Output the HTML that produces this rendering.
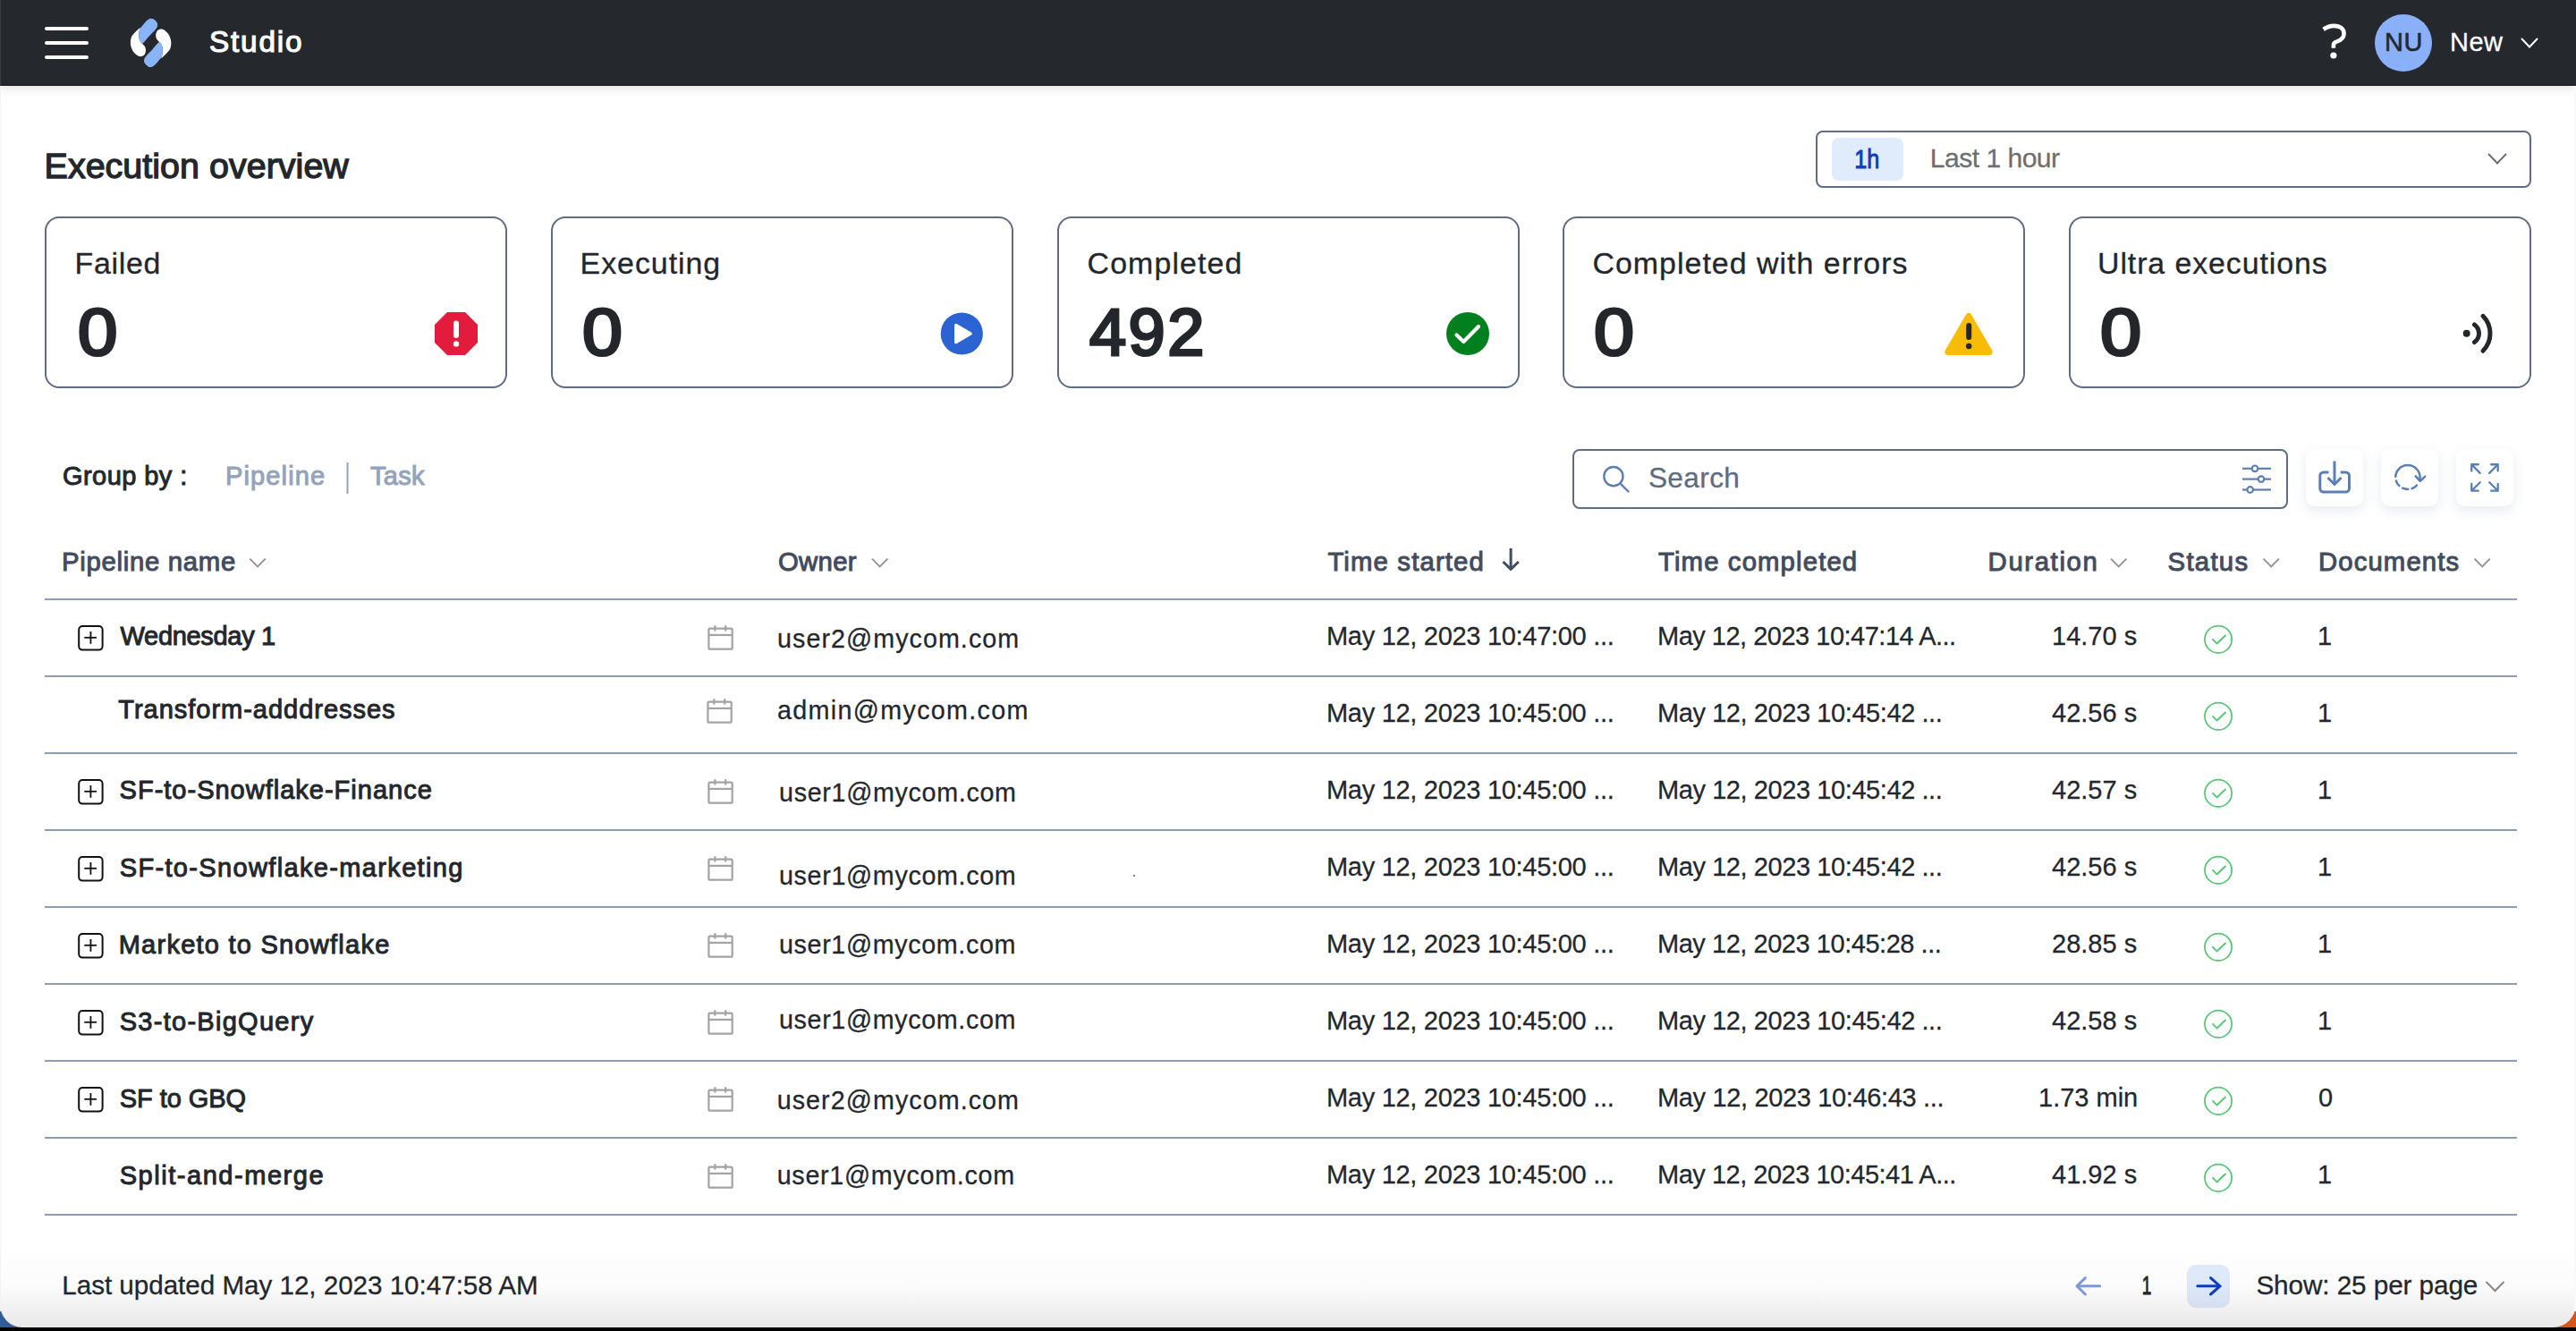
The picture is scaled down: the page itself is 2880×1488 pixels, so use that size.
<!DOCTYPE html><html><head><meta charset="utf-8"><title>Studio</title><style>
*{box-sizing:border-box}
html,body{margin:0;padding:0}
body{width:2880px;height:1488px;overflow:hidden;position:relative;background:#fff;font-family:"Liberation Sans",sans-serif}
.t{position:absolute;white-space:pre;line-height:1;-webkit-font-smoothing:antialiased}
.abs{position:absolute}
.card{position:absolute;top:242px;width:517px;height:192px;border:2px solid #5e6c86;border-radius:16px;background:#fff}
.rl{position:absolute;left:50px;width:2764px;height:2px;background:#8e9cb4}
.btn{position:absolute;top:502px;width:64px;height:64px;border-radius:10px;background:#fff;box-shadow:0 5px 14px rgba(70,90,130,0.13)}
</style></head><body><div class="abs" style="left:0;top:0;width:2880px;height:96px;background:#25282d;box-shadow:0 4px 10px rgba(0,0,0,0.10)"></div>
<div class="abs" style="left:0;top:95px;width:2880px;height:1px;background:#1b1e22"></div>
<div class="abs" style="left:50px;top:30px;width:49px;height:4px;border-radius:2px;background:#fff"></div>
<div class="abs" style="left:50px;top:46px;width:49px;height:4px;border-radius:2px;background:#fff"></div>
<div class="abs" style="left:50px;top:62px;width:49px;height:4px;border-radius:2px;background:#fff"></div>
<svg style="position:absolute;left:136px;top:16px" width="64" height="64" viewBox="0 0 64 64">
<path d="M21.20,14.40 C20.48,14.80 17.58,17.43 15.90,19.20 C14.22,20.97 12.10,22.75 11.10,25.00 C10.10,27.25 9.75,30.22 9.90,32.70 C10.05,35.18 11.00,37.90 12.00,39.90 C13.00,41.90 14.53,43.50 15.90,44.70 C17.27,45.90 18.68,46.93 20.20,47.10 C21.72,47.27 23.88,46.67 25.00,45.70 C26.12,44.73 26.70,42.83 26.90,41.30 C27.10,39.77 26.83,37.93 26.20,36.50 C25.57,35.07 24.10,33.98 23.10,32.70 C22.10,31.42 20.85,30.40 20.20,28.80 C19.55,27.20 19.20,25.10 19.20,23.10 C19.20,21.10 19.87,18.25 20.20,16.80 C20.53,15.35 21.92,14.00 21.20,14.40 Z" fill="#fff"/><path d="M44.00,49.30 C44.72,48.90 47.62,46.27 49.30,44.50 C50.98,42.73 53.10,40.95 54.10,38.70 C55.10,36.45 55.45,33.48 55.30,31.00 C55.15,28.52 54.20,25.80 53.20,23.80 C52.20,21.80 50.67,20.20 49.30,19.00 C47.93,17.80 46.52,16.77 45.00,16.60 C43.48,16.43 41.32,17.03 40.20,18.00 C39.08,18.97 38.50,20.87 38.30,22.40 C38.10,23.93 38.37,25.77 39.00,27.20 C39.63,28.63 41.10,29.72 42.10,31.00 C43.10,32.28 44.35,33.30 45.00,34.90 C45.65,36.50 46.00,38.60 46.00,40.60 C46.00,42.60 45.33,45.45 45.00,46.90 C44.67,48.35 43.28,49.70 44.00,49.30 Z" fill="#fff"/>
<path d="M23.10,32.70 C21.33,33.42 20.85,30.40 20.20,28.80 C19.55,27.20 19.20,25.10 19.20,23.10 C19.20,21.10 19.63,18.40 20.20,16.80 C20.77,15.20 21.48,14.93 22.60,13.50 C23.72,12.07 25.45,9.62 26.90,8.20 C28.35,6.78 29.85,5.48 31.30,5.00 C32.75,4.52 34.25,4.62 35.60,5.30 C36.95,5.98 38.65,7.90 39.40,9.10 C40.15,10.30 40.25,11.30 40.10,12.50 C39.95,13.70 40.05,14.30 38.50,16.30 C36.95,18.30 33.37,21.77 30.80,24.50 C28.23,27.23 24.87,31.98 23.10,32.70 Z" fill="#8ab4f8"/><path d="M42.10,31.00 C43.87,30.28 44.35,33.30 45.00,34.90 C45.65,36.50 46.00,38.60 46.00,40.60 C46.00,42.60 45.57,45.30 45.00,46.90 C44.43,48.50 43.72,48.77 42.60,50.20 C41.48,51.63 39.75,54.08 38.30,55.50 C36.85,56.92 35.35,58.22 33.90,58.70 C32.45,59.18 30.95,59.08 29.60,58.40 C28.25,57.72 26.55,55.80 25.80,54.60 C25.05,53.40 24.95,52.40 25.10,51.20 C25.25,50.00 25.15,49.40 26.70,47.40 C28.25,45.40 31.83,41.93 34.40,39.20 C36.97,36.47 40.33,31.72 42.10,31.00 Z" fill="#8ab4f8"/></svg>
<svg class="abs" style="left:0;top:0" width="2880" height="96"><path d="M2597.6,32.8 C2601.5,30.3 2605,28.9 2609.2,28.9 C2616.5,28.9 2620.6,32.6 2620.6,37.6 C2620.6,43.2 2616,45.5 2612.3,46.6 C2610,47.4 2608.9,48.3 2608.9,50.2 L2608.9,53.8" fill="none" stroke="#fff" stroke-width="4.6" stroke-linecap="butt" stroke-linejoin="round"/><circle cx="2608.9" cy="62" r="3.6" fill="#fff"/>
<path d="M2819,43 L2828,52.5 L2837,43" fill="none" stroke="#fff" stroke-width="2"/></svg>
<div class="abs" style="left:2655px;top:16px;width:64px;height:64px;border-radius:50%;background:#8ab0f9"></div>
<div class="abs" style="left:2030px;top:146px;width:800px;height:64px;border:2px solid #5e6c86;border-radius:8px"></div>
<div class="abs" style="left:2048px;top:154px;width:80px;height:48px;border-radius:8px;background:#e0ebfc"></div>
<div class="card" style="left:50px"></div>
<div class="card" style="left:616px"></div>
<div class="card" style="left:1182px"></div>
<div class="card" style="left:1747px"></div>
<div class="card" style="left:2312.5px"></div>
<div class="abs" style="left:1758px;top:502px;width:800px;height:67px;border:2px solid #5e6c86;border-radius:8px"></div>
<div class="btn" style="left:2578px"></div>
<div class="btn" style="left:2662px"></div>
<div class="btn" style="left:2746px"></div>
<div class="rl" style="top:669px"></div>
<div class="rl" style="top:755px"></div>
<div class="rl" style="top:841px"></div>
<div class="rl" style="top:927px"></div>
<div class="rl" style="top:1013px"></div>
<div class="rl" style="top:1099px"></div>
<div class="rl" style="top:1185px"></div>
<div class="rl" style="top:1271px"></div>
<div class="rl" style="top:1357px"></div>
<div class="abs" style="left:2445px;top:1414px;width:48px;height:48px;border-radius:10px;background:#e0ebfc"></div>
<svg class="abs" style="left:0;top:0" width="2880" height="1488"><polygon points="500,349 520,349 534,363 534,383 520,397 500,397 486,383 486,363" fill="#e31b3c"/><line x1="510" y1="361.5" x2="510" y2="375" stroke="#fff" stroke-width="6" stroke-linecap="round"/><circle cx="510" cy="384.4" r="3.2" fill="#fff"/><circle cx="1075.3" cy="373" r="23.6" fill="#2b63d3"/><polygon points="1068.8,363.5 1085,373 1068.8,382.5" fill="#fff" stroke="#fff" stroke-width="3.5" stroke-linejoin="round"/><circle cx="1641" cy="373" r="24" fill="#027f1f"/><polyline points="1628.5,374.5 1636.3,382 1653,365" fill="none" stroke="#fff" stroke-width="4.2" stroke-linecap="round" stroke-linejoin="round"/><polygon points="2201,353.5 2177.8,393.4 2224.2,393.4" fill="#f8bb06" stroke="#f8bb06" stroke-width="7" stroke-linejoin="round"/><line x1="2201.2" y1="364" x2="2201.2" y2="377" stroke="#23272c" stroke-width="6" stroke-linecap="round"/><circle cx="2201.2" cy="387" r="3.2" fill="#23272c"/><circle cx="2757.7" cy="372.8" r="4" fill="#23272c"/><path d="M2766.5,363 A12.1,12.1 0 0 1 2766.5,382.6" fill="none" stroke="#23272c" stroke-width="5" stroke-linecap="round"/><path d="M2776,353.3 A27.75,27.75 0 0 1 2776,392.3" fill="none" stroke="#23272c" stroke-width="5" stroke-linecap="round"/><path d="M2782,172 L2792,182.5 L2802,172" fill="none" stroke="#6e6e6e" stroke-width="2"/><line x1="388.5" y1="517" x2="388.5" y2="552" stroke="#94a3bc" stroke-width="2"/><circle cx="1803.9" cy="532.6" r="10.6" fill="none" stroke="#5a7fb5" stroke-width="2.4"/><line x1="1811.6" y1="540.6" x2="1820.5" y2="549.5" stroke="#5a7fb5" stroke-width="2.4" stroke-linecap="round"/><line x1="2507" y1="523.8" x2="2539" y2="523.8" stroke="#5a7fb5" stroke-width="2.2"/><circle cx="2521" cy="523.8" r="3.3" fill="#fff" stroke="#5a7fb5" stroke-width="2.2"/><line x1="2507" y1="535.6" x2="2539" y2="535.6" stroke="#5a7fb5" stroke-width="2.2"/><circle cx="2528" cy="535.6" r="3.3" fill="#fff" stroke="#5a7fb5" stroke-width="2.2"/><line x1="2507" y1="547.5" x2="2539" y2="547.5" stroke="#5a7fb5" stroke-width="2.2"/><circle cx="2515.7" cy="547.5" r="3.3" fill="#fff" stroke="#5a7fb5" stroke-width="2.2"/><line x1="1689.1" y1="613" x2="1689.1" y2="635" stroke="#434c5e" stroke-width="3"/><path d="M1680.5,628 L1689.1,636.3 L1697.8,628" fill="none" stroke="#434c5e" stroke-width="3" stroke-linejoin="round"/><path d="M279.3,624.7 L288.0,633.5 L296.7,624.7" fill="none" stroke="#939393" stroke-width="1.9"/><path d="M975,624.7 L983.7,633.5 L992.4,624.7" fill="none" stroke="#939393" stroke-width="1.9"/><path d="M2360,624.7 L2368.7,633.5 L2377.4,624.7" fill="none" stroke="#939393" stroke-width="1.9"/><path d="M2530.5,624.7 L2539.2,633.5 L2547.9,624.7" fill="none" stroke="#939393" stroke-width="1.9"/><path d="M2766.5,624.7 L2775.2,633.5 L2783.9,624.7" fill="none" stroke="#939393" stroke-width="1.9"/><rect x="88.2" y="700" width="26.4" height="26.6" rx="4" fill="none" stroke="#111" stroke-width="2"/><line x1="94.3" y1="712.8" x2="108" y2="712.8" stroke="#111" stroke-width="1.8"/><line x1="101.4" y1="706" x2="101.4" y2="719.8" stroke="#111" stroke-width="1.8"/><rect x="792.4" y="702.6" width="26.3" height="23.1" rx="1.5" fill="none" stroke="#a3a3a3" stroke-width="2.2"/><line x1="792.4" y1="709.9" x2="818.7" y2="709.9" stroke="#a3a3a3" stroke-width="2.2"/><line x1="799.35" y1="699.2" x2="799.35" y2="705.6" stroke="#a3a3a3" stroke-width="2.2"/><line x1="811.2" y1="699.2" x2="811.2" y2="705.6" stroke="#a3a3a3" stroke-width="2.2"/><circle cx="2480.05" cy="714.8" r="15.1" fill="none" stroke="#52c670" stroke-width="1.7"/><polyline points="2474,714.8 2478.5,719.5 2488,710.5" fill="none" stroke="#52c670" stroke-width="1.8" stroke-linecap="round" stroke-linejoin="round"/><rect x="791.4" y="784.6" width="26.3" height="23.1" rx="1.5" fill="none" stroke="#a3a3a3" stroke-width="2.2"/><line x1="791.4" y1="791.9" x2="817.7" y2="791.9" stroke="#a3a3a3" stroke-width="2.2"/><line x1="798.35" y1="781.2" x2="798.35" y2="787.6" stroke="#a3a3a3" stroke-width="2.2"/><line x1="810.2" y1="781.2" x2="810.2" y2="787.6" stroke="#a3a3a3" stroke-width="2.2"/><circle cx="2480.05" cy="800.8" r="15.1" fill="none" stroke="#52c670" stroke-width="1.7"/><polyline points="2474,800.8 2478.5,805.5 2488,796.5" fill="none" stroke="#52c670" stroke-width="1.8" stroke-linecap="round" stroke-linejoin="round"/><rect x="88.2" y="872" width="26.4" height="26.6" rx="4" fill="none" stroke="#111" stroke-width="2"/><line x1="94.3" y1="884.8" x2="108" y2="884.8" stroke="#111" stroke-width="1.8"/><line x1="101.4" y1="878" x2="101.4" y2="891.8" stroke="#111" stroke-width="1.8"/><rect x="792.4" y="874.6" width="26.3" height="23.1" rx="1.5" fill="none" stroke="#a3a3a3" stroke-width="2.2"/><line x1="792.4" y1="881.9" x2="818.7" y2="881.9" stroke="#a3a3a3" stroke-width="2.2"/><line x1="799.35" y1="871.2" x2="799.35" y2="877.6" stroke="#a3a3a3" stroke-width="2.2"/><line x1="811.2" y1="871.2" x2="811.2" y2="877.6" stroke="#a3a3a3" stroke-width="2.2"/><circle cx="2480.05" cy="886.8" r="15.1" fill="none" stroke="#52c670" stroke-width="1.7"/><polyline points="2474,886.8 2478.5,891.5 2488,882.5" fill="none" stroke="#52c670" stroke-width="1.8" stroke-linecap="round" stroke-linejoin="round"/><rect x="88.2" y="958" width="26.4" height="26.6" rx="4" fill="none" stroke="#111" stroke-width="2"/><line x1="94.3" y1="970.8" x2="108" y2="970.8" stroke="#111" stroke-width="1.8"/><line x1="101.4" y1="964" x2="101.4" y2="977.8" stroke="#111" stroke-width="1.8"/><rect x="792.4" y="960.6" width="26.3" height="23.1" rx="1.5" fill="none" stroke="#a3a3a3" stroke-width="2.2"/><line x1="792.4" y1="967.9" x2="818.7" y2="967.9" stroke="#a3a3a3" stroke-width="2.2"/><line x1="799.35" y1="957.2" x2="799.35" y2="963.6" stroke="#a3a3a3" stroke-width="2.2"/><line x1="811.2" y1="957.2" x2="811.2" y2="963.6" stroke="#a3a3a3" stroke-width="2.2"/><circle cx="2480.05" cy="972.8" r="15.1" fill="none" stroke="#52c670" stroke-width="1.7"/><polyline points="2474,972.8 2478.5,977.5 2488,968.5" fill="none" stroke="#52c670" stroke-width="1.8" stroke-linecap="round" stroke-linejoin="round"/><rect x="88.2" y="1044" width="26.4" height="26.6" rx="4" fill="none" stroke="#111" stroke-width="2"/><line x1="94.3" y1="1056.8" x2="108" y2="1056.8" stroke="#111" stroke-width="1.8"/><line x1="101.4" y1="1050" x2="101.4" y2="1063.8" stroke="#111" stroke-width="1.8"/><rect x="792.4" y="1046.6" width="26.3" height="23.1" rx="1.5" fill="none" stroke="#a3a3a3" stroke-width="2.2"/><line x1="792.4" y1="1053.9" x2="818.7" y2="1053.9" stroke="#a3a3a3" stroke-width="2.2"/><line x1="799.35" y1="1043.2" x2="799.35" y2="1049.6" stroke="#a3a3a3" stroke-width="2.2"/><line x1="811.2" y1="1043.2" x2="811.2" y2="1049.6" stroke="#a3a3a3" stroke-width="2.2"/><circle cx="2480.05" cy="1058.8" r="15.1" fill="none" stroke="#52c670" stroke-width="1.7"/><polyline points="2474,1058.8 2478.5,1063.5 2488,1054.5" fill="none" stroke="#52c670" stroke-width="1.8" stroke-linecap="round" stroke-linejoin="round"/><rect x="88.2" y="1130" width="26.4" height="26.6" rx="4" fill="none" stroke="#111" stroke-width="2"/><line x1="94.3" y1="1142.8" x2="108" y2="1142.8" stroke="#111" stroke-width="1.8"/><line x1="101.4" y1="1136" x2="101.4" y2="1149.8" stroke="#111" stroke-width="1.8"/><rect x="792.4" y="1132.6" width="26.3" height="23.1" rx="1.5" fill="none" stroke="#a3a3a3" stroke-width="2.2"/><line x1="792.4" y1="1139.9" x2="818.7" y2="1139.9" stroke="#a3a3a3" stroke-width="2.2"/><line x1="799.35" y1="1129.2" x2="799.35" y2="1135.6" stroke="#a3a3a3" stroke-width="2.2"/><line x1="811.2" y1="1129.2" x2="811.2" y2="1135.6" stroke="#a3a3a3" stroke-width="2.2"/><circle cx="2480.05" cy="1144.8" r="15.1" fill="none" stroke="#52c670" stroke-width="1.7"/><polyline points="2474,1144.8 2478.5,1149.5 2488,1140.5" fill="none" stroke="#52c670" stroke-width="1.8" stroke-linecap="round" stroke-linejoin="round"/><rect x="88.2" y="1216" width="26.4" height="26.6" rx="4" fill="none" stroke="#111" stroke-width="2"/><line x1="94.3" y1="1228.8" x2="108" y2="1228.8" stroke="#111" stroke-width="1.8"/><line x1="101.4" y1="1222" x2="101.4" y2="1235.8" stroke="#111" stroke-width="1.8"/><rect x="792.4" y="1218.6" width="26.3" height="23.1" rx="1.5" fill="none" stroke="#a3a3a3" stroke-width="2.2"/><line x1="792.4" y1="1225.9" x2="818.7" y2="1225.9" stroke="#a3a3a3" stroke-width="2.2"/><line x1="799.35" y1="1215.2" x2="799.35" y2="1221.6" stroke="#a3a3a3" stroke-width="2.2"/><line x1="811.2" y1="1215.2" x2="811.2" y2="1221.6" stroke="#a3a3a3" stroke-width="2.2"/><circle cx="2480.05" cy="1230.8" r="15.1" fill="none" stroke="#52c670" stroke-width="1.7"/><polyline points="2474,1230.8 2478.5,1235.5 2488,1226.5" fill="none" stroke="#52c670" stroke-width="1.8" stroke-linecap="round" stroke-linejoin="round"/><rect x="792.4" y="1304.6" width="26.3" height="23.1" rx="1.5" fill="none" stroke="#a3a3a3" stroke-width="2.2"/><line x1="792.4" y1="1311.9" x2="818.7" y2="1311.9" stroke="#a3a3a3" stroke-width="2.2"/><line x1="799.35" y1="1301.2" x2="799.35" y2="1307.6" stroke="#a3a3a3" stroke-width="2.2"/><line x1="811.2" y1="1301.2" x2="811.2" y2="1307.6" stroke="#a3a3a3" stroke-width="2.2"/><circle cx="2480.05" cy="1316.8" r="15.1" fill="none" stroke="#52c670" stroke-width="1.7"/><polyline points="2474,1316.8 2478.5,1321.5 2488,1312.5" fill="none" stroke="#52c670" stroke-width="1.8" stroke-linecap="round" stroke-linejoin="round"/><circle cx="1268" cy="979" r="1" fill="#555"/><path d="M2347.6,1437.8 L2322,1437.8 M2331.4,1428.6 L2322,1437.8 L2331.4,1447" fill="none" stroke="#7f9cdb" stroke-width="3" stroke-linecap="round" stroke-linejoin="round"/><path d="M2482.2,1437.8 L2456.8,1437.8 M2471.5,1428.6 L2482,1437.8 L2471.5,1447" fill="none" stroke="#0b3ec2" stroke-width="3" stroke-linecap="round" stroke-linejoin="round"/><path d="M2779.5,1433 L2789.5,1443 L2799.5,1433" fill="none" stroke="#8a8a8a" stroke-width="2"/><path d="M2603.5,527.9 H2597.8 a4,4 0 0 0 -4,4 V546 a4,4 0 0 0 4,4 H2622.5 a4,4 0 0 0 4,-4 V531.9 a4,4 0 0 0 -4,-4 H2616.7" fill="none" stroke="#5a7fb5" stroke-width="3"/><line x1="2610" y1="515.5" x2="2610" y2="540" stroke="#5a7fb5" stroke-width="3"/><path d="M2602.5,534 L2610,541.5 L2617.5,534" fill="none" stroke="#5a7fb5" stroke-width="3"/><path d="M2678.21,533.78 A13.7,13.7 0 0 1 2705.60,533.30 L2705.60,536.30" fill="none" stroke="#5a7fb5" stroke-width="2.5"/><path d="M2678.87,537.53 A13.7,13.7 0 0 0 2682.38,543.15" fill="none" stroke="#5a7fb5" stroke-width="2.5" stroke-linecap="round"/><path d="M2686.11,545.72 A13.7,13.7 0 0 0 2692.14,547.00" fill="none" stroke="#5a7fb5" stroke-width="2.5" stroke-linecap="round"/><path d="M2696.59,546.17 A13.7,13.7 0 0 0 2701.92,542.64" fill="none" stroke="#5a7fb5" stroke-width="2.5" stroke-linecap="round"/><path d="M2700.7,532.3 L2705.8,537.8 L2711.2,532.7" fill="none" stroke="#5a7fb5" stroke-width="2.5" stroke-linecap="round" stroke-linejoin="round"/><path d="M2770.8,519.25 L2763.25,519.25 L2763.25,526.6 M2763.25,519.25 L2772.7,528.9" fill="none" stroke="#5a7fb5" stroke-width="2.3" stroke-linecap="round" stroke-linejoin="round"/><path d="M2785.1,519.25 L2792.7,519.25 L2792.7,526.6 M2792.7,519.25 L2783.2,528.9" fill="none" stroke="#5a7fb5" stroke-width="2.3" stroke-linecap="round" stroke-linejoin="round"/><path d="M2770.8,548.7 L2763.25,548.7 L2763.25,540.9 M2763.25,548.7 L2772.7,539.2" fill="none" stroke="#5a7fb5" stroke-width="2.3" stroke-linecap="round" stroke-linejoin="round"/><path d="M2785.1,548.7 L2792.7,548.7 L2792.7,540.9 M2792.7,548.7 L2783.2,539.2" fill="none" stroke="#5a7fb5" stroke-width="2.3" stroke-linecap="round" stroke-linejoin="round"/></svg>
<div class=t style='left:234.0px;top:29.8px;font-size:33.3px;font-weight:400;letter-spacing:1.80px;color:#ffffff;-webkit-text-stroke:1.13px #ffffff'>Studio</div>
<div class=t style='left:2666.0px;top:32.9px;font-size:29.0px;font-weight:400;letter-spacing:0.50px;color:#25282d;-webkit-text-stroke:0.6px #25282d'>NU</div>
<div class=t style='left:2739.0px;top:32.7px;font-size:29.0px;font-weight:400;letter-spacing:0.50px;color:#ffffff;-webkit-text-stroke:0.26px #ffffff'>New</div>
<div class=t style='left:49.6px;top:166.4px;font-size:39.4px;font-weight:400;letter-spacing:0.05px;color:#23272c;-webkit-text-stroke:1.34px #23272c'>Execution overview</div>
<div class=t style='left:2072.8px;top:161.5px;font-size:30.4px;font-weight:400;letter-spacing:0.00px;color:#0b3ec2;-webkit-text-stroke:1.03px #0b3ec2;transform:scaleX(0.829);transform-origin:2px 0'>1h</div>
<div class=t style='left:2157.8px;top:161.7px;font-size:30.1px;font-weight:400;letter-spacing:-0.53px;color:#6e6e6e;-webkit-text-stroke:0.27px #6e6e6e'>Last 1 hour</div>
<div class=t style='left:83.5px;top:277.5px;font-size:33.9px;font-weight:400;letter-spacing:0.70px;color:#23272c;-webkit-text-stroke:0.31px #23272c'>Failed</div>
<div class=t style='left:648.6px;top:277.5px;font-size:33.9px;font-weight:400;letter-spacing:0.97px;color:#23272c;-webkit-text-stroke:0.31px #23272c'>Executing</div>
<div class=t style='left:1215.6px;top:277.5px;font-size:33.9px;font-weight:400;letter-spacing:1.10px;color:#23272c;-webkit-text-stroke:0.31px #23272c'>Completed</div>
<div class=t style='left:1780.5px;top:277.5px;font-size:33.9px;font-weight:400;letter-spacing:1.02px;color:#23272c;-webkit-text-stroke:0.31px #23272c'>Completed with errors</div>
<div class=t style='left:2345.0px;top:277.5px;font-size:33.9px;font-weight:400;letter-spacing:0.91px;color:#23272c;-webkit-text-stroke:0.31px #23272c'>Ultra executions</div>
<div class=t style='left:87.0px;top:334.5px;font-size:74px;font-weight:400;letter-spacing:0.00px;color:#23272c;-webkit-text-stroke:3.11px #23272c;transform:scaleX(1.077);transform-origin:1px 0'>0</div>
<div class=t style='left:651.2px;top:334.5px;font-size:74px;font-weight:400;letter-spacing:0.00px;color:#23272c;-webkit-text-stroke:3.11px #23272c;transform:scaleX(1.090);transform-origin:1px 0'>0</div>
<div class=t style='left:1217.9px;top:334.5px;font-size:74px;font-weight:400;letter-spacing:2.50px;color:#23272c;-webkit-text-stroke:3.11px #23272c'>492</div>
<div class=t style='left:1782.1px;top:334.5px;font-size:74px;font-weight:400;letter-spacing:0.00px;color:#23272c;-webkit-text-stroke:3.11px #23272c;transform:scaleX(1.092);transform-origin:1px 0'>0</div>
<div class=t style='left:2347.5px;top:334.5px;font-size:74px;font-weight:400;letter-spacing:0.00px;color:#23272c;-webkit-text-stroke:3.11px #23272c;transform:scaleX(1.121);transform-origin:1px 0'>0</div>
<div class=t style='left:70.0px;top:518.4px;font-size:29.0px;font-weight:400;letter-spacing:0.44px;color:#23272c;-webkit-text-stroke:0.99px #23272c'>Group by :</div>
<div class=t style='left:252.0px;top:518.4px;font-size:29.0px;font-weight:400;letter-spacing:1.14px;color:#94a3bc;-webkit-text-stroke:0.99px #94a3bc'>Pipeline</div>
<div class=t style='left:414.0px;top:518.4px;font-size:29.0px;font-weight:400;letter-spacing:0.33px;color:#94a3bc;-webkit-text-stroke:0.99px #94a3bc'>Task</div>
<div class=t style='left:1842.9px;top:519.0px;font-size:31.6px;font-weight:400;letter-spacing:0.38px;color:#5f6b7e;-webkit-text-stroke:0.28px #5f6b7e'>Search</div>
<div class=t style='left:69.0px;top:612.9px;font-size:29.3px;font-weight:400;letter-spacing:0.71px;color:#434c5e;-webkit-text-stroke:1.0px #434c5e'>Pipeline name</div>
<div class=t style='left:870.0px;top:612.9px;font-size:29.3px;font-weight:400;letter-spacing:0.32px;color:#434c5e;-webkit-text-stroke:1.0px #434c5e'>Owner</div>
<div class=t style='left:1484.4px;top:612.9px;font-size:29.3px;font-weight:400;letter-spacing:1.16px;color:#434c5e;-webkit-text-stroke:1.0px #434c5e'>Time started</div>
<div class=t style='left:1854.0px;top:612.9px;font-size:29.3px;font-weight:400;letter-spacing:1.14px;color:#434c5e;-webkit-text-stroke:1.0px #434c5e'>Time completed</div>
<div class=t style='left:2222.6px;top:612.9px;font-size:29.3px;font-weight:400;letter-spacing:1.63px;color:#434c5e;-webkit-text-stroke:1.0px #434c5e'>Duration</div>
<div class=t style='left:2423.6px;top:612.9px;font-size:29.3px;font-weight:400;letter-spacing:1.28px;color:#434c5e;-webkit-text-stroke:1.0px #434c5e'>Status</div>
<div class=t style='left:2592.0px;top:612.9px;font-size:29.3px;font-weight:400;letter-spacing:1.12px;color:#434c5e;-webkit-text-stroke:1.0px #434c5e'>Documents</div>
<div class=t style='left:134.6px;top:697.4px;font-size:29.0px;font-weight:400;letter-spacing:-0.32px;color:#23272c;-webkit-text-stroke:0.99px #23272c'>Wednesday 1</div>
<div class=t style='left:132.3px;top:779.4px;font-size:29.0px;font-weight:400;letter-spacing:0.98px;color:#23272c;-webkit-text-stroke:0.99px #23272c'>Transform-adddresses</div>
<div class=t style='left:133.6px;top:869.4px;font-size:29.0px;font-weight:400;letter-spacing:1.00px;color:#23272c;-webkit-text-stroke:0.99px #23272c'>SF-to-Snowflake-Finance</div>
<div class=t style='left:133.7px;top:956.3px;font-size:29.0px;font-weight:400;letter-spacing:1.35px;color:#23272c;-webkit-text-stroke:0.99px #23272c'>SF-to-Snowflake-marketing</div>
<div class=t style='left:132.7px;top:1041.8px;font-size:29.0px;font-weight:400;letter-spacing:1.25px;color:#23272c;-webkit-text-stroke:0.99px #23272c'>Marketo to Snowflake</div>
<div class=t style='left:133.7px;top:1128.0px;font-size:29.0px;font-weight:400;letter-spacing:1.28px;color:#23272c;-webkit-text-stroke:0.99px #23272c'>S3-to-BigQuery</div>
<div class=t style='left:133.7px;top:1213.9px;font-size:29.0px;font-weight:400;letter-spacing:-0.05px;color:#23272c;-webkit-text-stroke:0.99px #23272c'>SF to GBQ</div>
<div class=t style='left:133.7px;top:1300.1px;font-size:29.0px;font-weight:400;letter-spacing:1.54px;color:#23272c;-webkit-text-stroke:0.99px #23272c'>Split-and-merge</div>
<div class=t style='left:869.0px;top:699.7px;font-size:28.7px;font-weight:400;letter-spacing:1.05px;color:#23272c;-webkit-text-stroke:0.26px #23272c'>user2@mycom.com</div>
<div class=t style='left:869.0px;top:780.0px;font-size:28.7px;font-weight:400;letter-spacing:1.33px;color:#23272c;-webkit-text-stroke:0.26px #23272c'>admin@mycom.com</div>
<div class=t style='left:871.0px;top:872.0px;font-size:28.7px;font-weight:400;letter-spacing:0.68px;color:#23272c;-webkit-text-stroke:0.26px #23272c'>user1@mycom.com</div>
<div class=t style='left:871.0px;top:964.5px;font-size:28.7px;font-weight:400;letter-spacing:0.66px;color:#23272c;-webkit-text-stroke:0.26px #23272c'>user1@mycom.com</div>
<div class=t style='left:871.0px;top:1041.9px;font-size:28.7px;font-weight:400;letter-spacing:0.64px;color:#23272c;-webkit-text-stroke:0.26px #23272c'>user1@mycom.com</div>
<div class=t style='left:871.0px;top:1125.5px;font-size:28.7px;font-weight:400;letter-spacing:0.64px;color:#23272c;-webkit-text-stroke:0.26px #23272c'>user1@mycom.com</div>
<div class=t style='left:868.7px;top:1215.7px;font-size:28.7px;font-weight:400;letter-spacing:1.06px;color:#23272c;-webkit-text-stroke:0.26px #23272c'>user2@mycom.com</div>
<div class=t style='left:868.7px;top:1299.7px;font-size:28.7px;font-weight:400;letter-spacing:0.71px;color:#23272c;-webkit-text-stroke:0.26px #23272c'>user1@mycom.com</div>
<div class=t style='left:1483.0px;top:697.4px;font-size:29.0px;font-weight:400;letter-spacing:-0.30px;color:#23272c;-webkit-text-stroke:0.26px #23272c'>May 12, 2023 10:47:00 ...</div>
<div class=t style='left:1853.0px;top:697.4px;font-size:29.0px;font-weight:400;letter-spacing:-0.50px;color:#23272c;-webkit-text-stroke:0.26px #23272c'>May 12, 2023 10:47:14 A...</div>
<div class=t style='left:2294.0px;top:697.4px;font-size:29.0px;font-weight:400;letter-spacing:0.00px;color:#23272c;-webkit-text-stroke:0.26px #23272c'>14.70 s</div>
<div class=t style='left:2591.0px;top:697.4px;font-size:29.0px;font-weight:400;letter-spacing:0.00px;color:#23272c;-webkit-text-stroke:0.26px #23272c'>1</div>
<div class=t style='left:1483.0px;top:783.4px;font-size:29.0px;font-weight:400;letter-spacing:-0.30px;color:#23272c;-webkit-text-stroke:0.26px #23272c'>May 12, 2023 10:45:00 ...</div>
<div class=t style='left:1853.0px;top:783.4px;font-size:29.0px;font-weight:400;letter-spacing:-0.42px;color:#23272c;-webkit-text-stroke:0.26px #23272c'>May 12, 2023 10:45:42 ...</div>
<div class=t style='left:2294.0px;top:783.4px;font-size:29.0px;font-weight:400;letter-spacing:0.00px;color:#23272c;-webkit-text-stroke:0.26px #23272c'>42.56 s</div>
<div class=t style='left:2591.0px;top:783.4px;font-size:29.0px;font-weight:400;letter-spacing:0.00px;color:#23272c;-webkit-text-stroke:0.26px #23272c'>1</div>
<div class=t style='left:1483.0px;top:869.4px;font-size:29.0px;font-weight:400;letter-spacing:-0.30px;color:#23272c;-webkit-text-stroke:0.26px #23272c'>May 12, 2023 10:45:00 ...</div>
<div class=t style='left:1853.0px;top:869.4px;font-size:29.0px;font-weight:400;letter-spacing:-0.42px;color:#23272c;-webkit-text-stroke:0.26px #23272c'>May 12, 2023 10:45:42 ...</div>
<div class=t style='left:2294.0px;top:869.4px;font-size:29.0px;font-weight:400;letter-spacing:0.00px;color:#23272c;-webkit-text-stroke:0.26px #23272c'>42.57 s</div>
<div class=t style='left:2591.0px;top:869.4px;font-size:29.0px;font-weight:400;letter-spacing:0.00px;color:#23272c;-webkit-text-stroke:0.26px #23272c'>1</div>
<div class=t style='left:1483.0px;top:955.4px;font-size:29.0px;font-weight:400;letter-spacing:-0.30px;color:#23272c;-webkit-text-stroke:0.26px #23272c'>May 12, 2023 10:45:00 ...</div>
<div class=t style='left:1853.0px;top:955.4px;font-size:29.0px;font-weight:400;letter-spacing:-0.42px;color:#23272c;-webkit-text-stroke:0.26px #23272c'>May 12, 2023 10:45:42 ...</div>
<div class=t style='left:2294.0px;top:955.4px;font-size:29.0px;font-weight:400;letter-spacing:0.00px;color:#23272c;-webkit-text-stroke:0.26px #23272c'>42.56 s</div>
<div class=t style='left:2591.0px;top:955.4px;font-size:29.0px;font-weight:400;letter-spacing:0.00px;color:#23272c;-webkit-text-stroke:0.26px #23272c'>1</div>
<div class=t style='left:1483.0px;top:1041.4px;font-size:29.0px;font-weight:400;letter-spacing:-0.30px;color:#23272c;-webkit-text-stroke:0.26px #23272c'>May 12, 2023 10:45:00 ...</div>
<div class=t style='left:1853.0px;top:1041.4px;font-size:29.0px;font-weight:400;letter-spacing:-0.46px;color:#23272c;-webkit-text-stroke:0.26px #23272c'>May 12, 2023 10:45:28 ...</div>
<div class=t style='left:2294.0px;top:1041.4px;font-size:29.0px;font-weight:400;letter-spacing:0.00px;color:#23272c;-webkit-text-stroke:0.26px #23272c'>28.85 s</div>
<div class=t style='left:2591.0px;top:1041.4px;font-size:29.0px;font-weight:400;letter-spacing:0.00px;color:#23272c;-webkit-text-stroke:0.26px #23272c'>1</div>
<div class=t style='left:1483.0px;top:1127.4px;font-size:29.0px;font-weight:400;letter-spacing:-0.30px;color:#23272c;-webkit-text-stroke:0.26px #23272c'>May 12, 2023 10:45:00 ...</div>
<div class=t style='left:1853.0px;top:1127.4px;font-size:29.0px;font-weight:400;letter-spacing:-0.42px;color:#23272c;-webkit-text-stroke:0.26px #23272c'>May 12, 2023 10:45:42 ...</div>
<div class=t style='left:2294.0px;top:1127.4px;font-size:29.0px;font-weight:400;letter-spacing:0.00px;color:#23272c;-webkit-text-stroke:0.26px #23272c'>42.58 s</div>
<div class=t style='left:2591.0px;top:1127.4px;font-size:29.0px;font-weight:400;letter-spacing:0.00px;color:#23272c;-webkit-text-stroke:0.26px #23272c'>1</div>
<div class=t style='left:1483.0px;top:1213.4px;font-size:29.0px;font-weight:400;letter-spacing:-0.30px;color:#23272c;-webkit-text-stroke:0.26px #23272c'>May 12, 2023 10:45:00 ...</div>
<div class=t style='left:1853.0px;top:1213.4px;font-size:29.0px;font-weight:400;letter-spacing:-0.35px;color:#23272c;-webkit-text-stroke:0.26px #23272c'>May 12, 2023 10:46:43 ...</div>
<div class=t style='left:2279.0px;top:1213.4px;font-size:29.0px;font-weight:400;letter-spacing:0.00px;color:#23272c;-webkit-text-stroke:0.26px #23272c'>1.73 min</div>
<div class=t style='left:2592.0px;top:1213.4px;font-size:29.0px;font-weight:400;letter-spacing:0.00px;color:#23272c;-webkit-text-stroke:0.26px #23272c'>0</div>
<div class=t style='left:1483.0px;top:1299.4px;font-size:29.0px;font-weight:400;letter-spacing:-0.30px;color:#23272c;-webkit-text-stroke:0.26px #23272c'>May 12, 2023 10:45:00 ...</div>
<div class=t style='left:1853.0px;top:1299.4px;font-size:29.0px;font-weight:400;letter-spacing:-0.49px;color:#23272c;-webkit-text-stroke:0.26px #23272c'>May 12, 2023 10:45:41 A...</div>
<div class=t style='left:2294.0px;top:1299.4px;font-size:29.0px;font-weight:400;letter-spacing:0.00px;color:#23272c;-webkit-text-stroke:0.26px #23272c'>41.92 s</div>
<div class=t style='left:2591.0px;top:1299.4px;font-size:29.0px;font-weight:400;letter-spacing:0.00px;color:#23272c;-webkit-text-stroke:0.26px #23272c'>1</div>
<div class=t style='left:69.3px;top:1421.9px;font-size:29.6px;font-weight:400;letter-spacing:-0.02px;color:#23272c;-webkit-text-stroke:0.27px #23272c'>Last updated May 12, 2023 10:47:58 AM</div>
<div class=t style='left:2393.5px;top:1422.2px;font-size:29.7px;font-weight:400;letter-spacing:0.00px;color:#23272c;-webkit-text-stroke:1.01px #23272c;transform:scaleX(0.643);transform-origin:2px 0'>1</div>
<div class=t style='left:2522.4px;top:1422.1px;font-size:29.7px;font-weight:400;letter-spacing:-0.08px;color:#23272c;-webkit-text-stroke:0.27px #23272c'>Show: 25 per page</div>
<div class="abs" style="left:0;top:1392px;width:2880px;height:92px;background:linear-gradient(to bottom, rgba(0,0,0,0) 0%, rgba(0,0,0,0.015) 50%, rgba(0,0,0,0.09) 100%);pointer-events:none"></div>
<div class="abs" style="left:0;top:1484px;width:2880px;height:4px;background:#000"></div>
<svg class="abs" style="left:0;top:1450px" width="2880" height="34"><path d="M0,8 A25,26 0 0 0 25,34 L0,34 Z" fill="#2f5f98"/><path d="M2880,8 A26,26 0 0 1 2854,34 L2880,34 Z" fill="#d4561d"/></svg>
<div class="abs" style="left:0;top:0;width:1px;height:96px;background:#3b3f45"></div>
<div class="abs" style="left:0;top:96px;width:1px;height:1370px;background:#f3f3f3"></div>
<div class="abs" style="left:2878px;top:96px;width:2px;height:1370px;background:#f9f9f9"></div></body></html>
